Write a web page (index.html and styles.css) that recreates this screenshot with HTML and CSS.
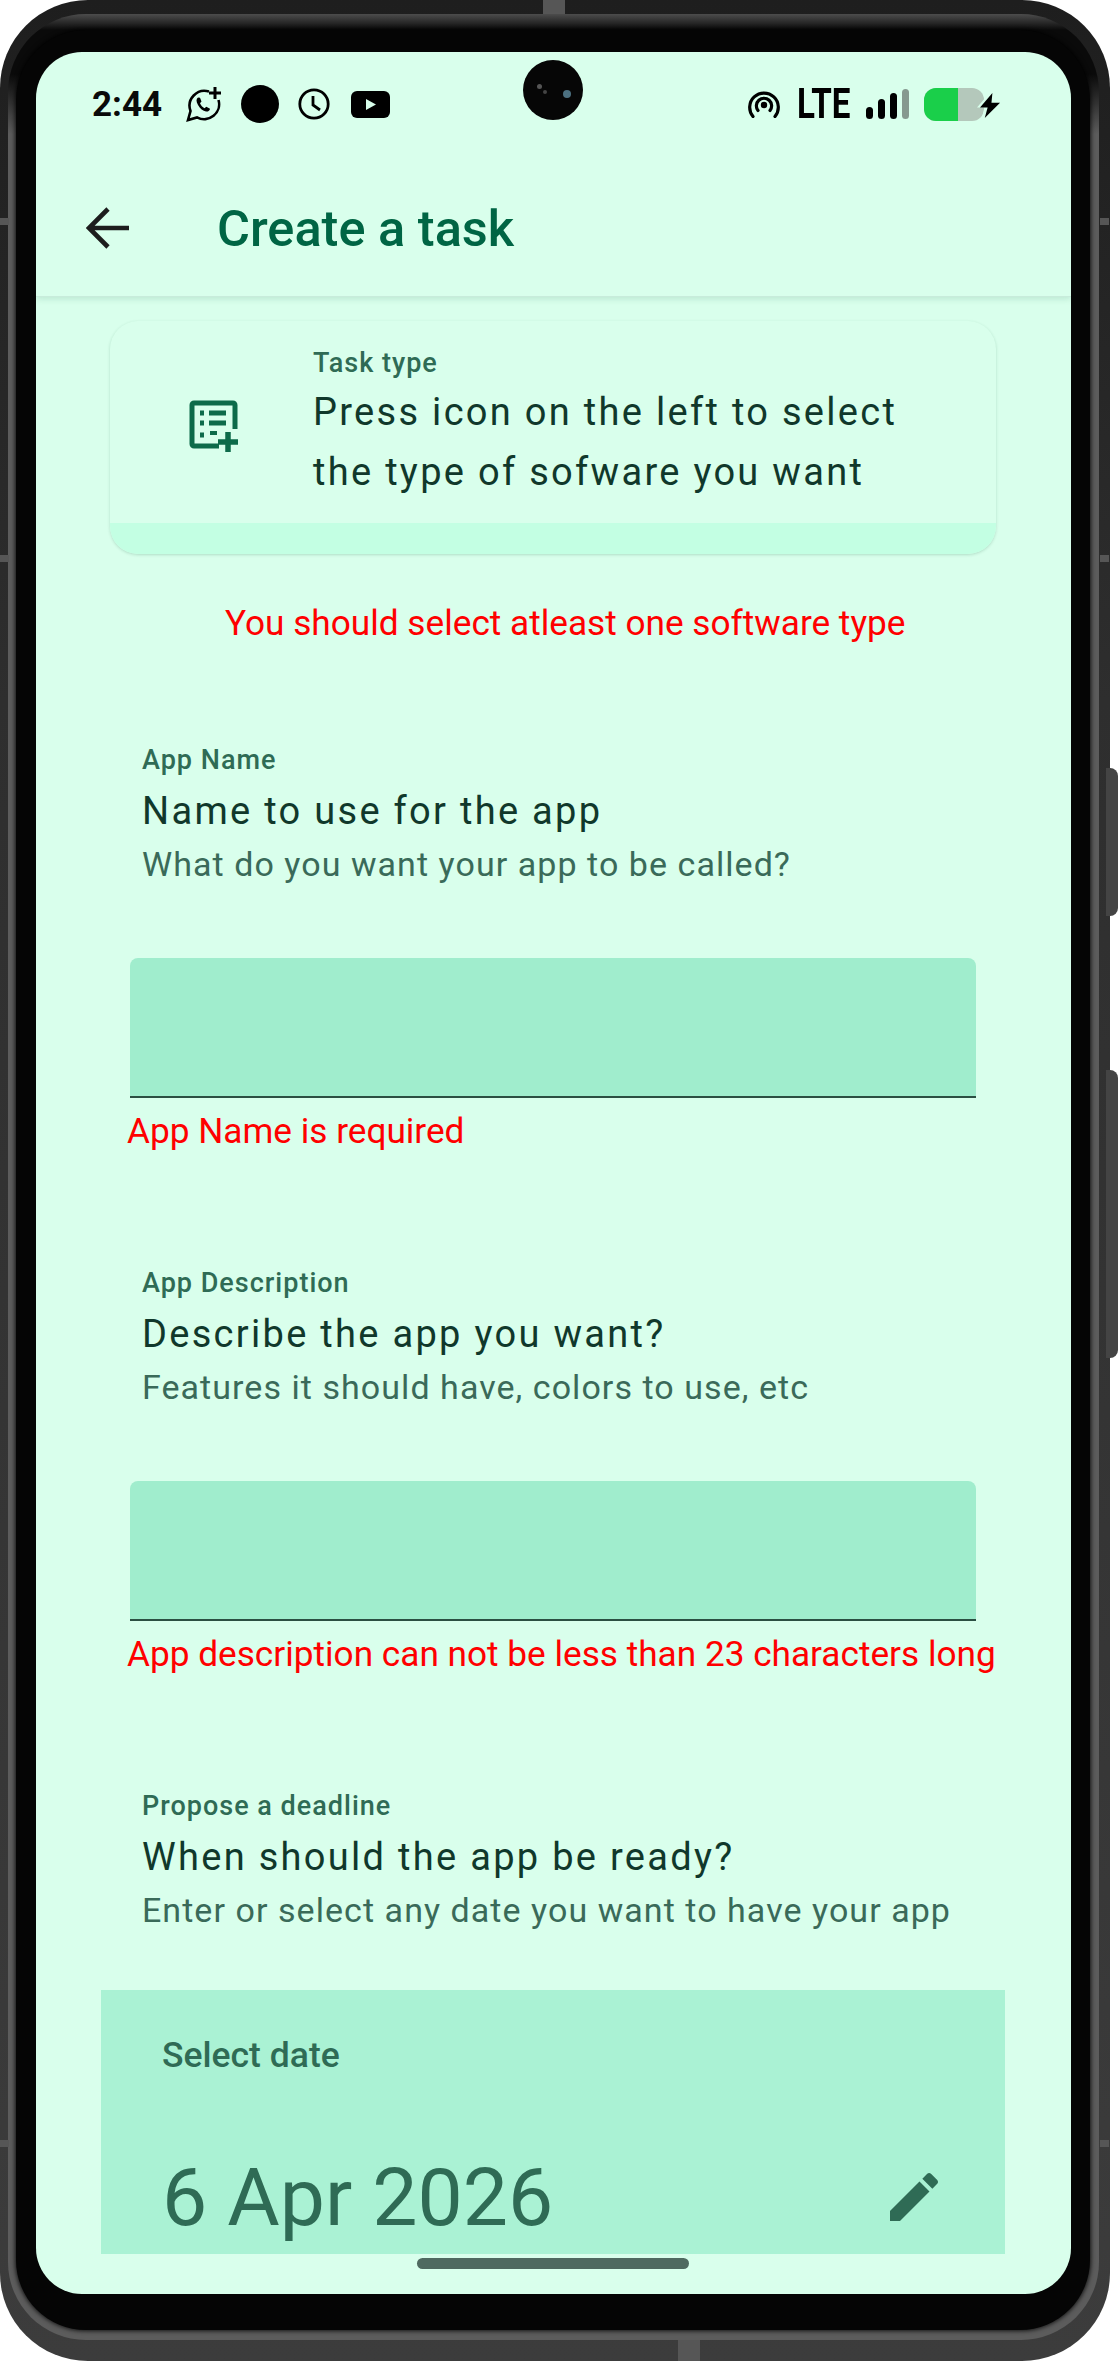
FILE: index.html
```html
<!DOCTYPE html>
<html lang="en">
<head>
    <meta charset="UTF-8">
    <meta name="viewport" content="width=device-width, initial-scale=1.0">
    <title>Create a task</title>
    <link rel="stylesheet" href="styles.css">
</head>
<body>
  <div class="device">
    <div class="side-button volume"></div>
    <div class="side-button power"></div>
    <div class="band band-top"></div>
    <div class="band band-bottom"></div>
    <div class="band band-left one"></div>
    <div class="band band-left two"></div>
    <div class="band band-left three"></div>
    <div class="band band-right one"></div>
    <div class="band band-right two"></div>
    <div class="band band-right three"></div>

    <div class="shell">
      <div class="rim">
        <div class="bezel">
          <div class="screen">
            <div class="camera">
              <span class="spec spec-a"></span>
              <span class="spec spec-b"></span>
              <span class="spec spec-c"></span>
            </div>

            <header class="top-bar">
              <div class="status-bar">
                <div class="status-left">
                  <span class="clock-time">2:44</span>
                  <svg class="ic-whatsapp" viewBox="0 0 36 36" fill="none" stroke="#000">
                    <path d="M23 5.500A15 15 0 0 0 4.500 25L2 34l9-2.600A15 15 0 0 0 32.500 14" stroke-width="2.600"/>
                    <path d="M12 11.500c-2 1.500-2 4 0 7.500 2 3.500 5 6 8 6.500 2 .3 3.800-.8 4-2.800l-3.700-2-1.800 1.500c-2-1-3.600-2.700-4.500-5l1.500-1.700-1.500-3.800z" fill="#000" stroke="none"/>
                    <path d="M29 1v12M23 7h12" stroke-width="3"/>
                  </svg>
                  <span class="dot"></span>
                  <svg class="ic-clock" viewBox="0 0 32 32" fill="none" stroke="#000" stroke-width="2.800">
                    <circle cx="16" cy="16" r="14.200"/>
                    <path d="M15 8v9l7 5"/>
                  </svg>
                  <svg class="ic-youtube" viewBox="0 0 39 27">
                    <rect width="39" height="27" rx="6" fill="#000"/>
                    <path d="M15 8v11l10-5.500z" fill="#d9ffec"/>
                  </svg>
                </div>
                <div class="status-right">
                  <svg class="ic-hotspot" viewBox="0 0 32 28" fill="none" stroke="#000" stroke-width="3.200" stroke-linecap="round">
                    <path d="M5 26.500A14.300 14.300 0 1 1 27 26.500"/>
                    <path d="M10 20.500A7.600 7.600 0 1 1 22 20.500"/>
                    <circle cx="16" cy="15" r="3.200" fill="#000" stroke="none"/>
                  </svg>
                  <span class="net-label">LTE</span>
                  <div class="signal">
                    <span class="bar b1"></span>
                    <span class="bar b2"></span>
                    <span class="bar b3"></span>
                    <span class="bar b4"></span>
                  </div>
                  <div class="battery">
                    <div class="battery-fill"></div>
                    <svg class="ic-bolt" viewBox="0 0 22 26">
                      <path d="M13 0L0 15h8l-3 11L21 10h-9z" fill="#000"/>
                    </svg>
                  </div>
                </div>
              </div>
              <div class="app-bar">
                <svg class="ic-back" viewBox="0 0 44 42" fill="none" stroke="#1d1d1d" stroke-width="4.600">
                  <path d="M43 21H4M22 2L3 21l19 19"/>
                </svg>
                <h1 class="page-title">Create a task</h1>
              </div>
            </header>

            <main class="content">
              <section class="type-card">
                <div class="type-card-body">
                  <svg class="ic-task" viewBox="0 0 50 52" fill="none" stroke="#0d6b4a">
                    <path d="M30 46H5a2 2 0 0 1-2-2V5a2 2 0 0 1 2-2h39a2 2 0 0 1 2 2v24" stroke-width="5"/>
                    <path d="M11 13h4M11 23h4M11 35h4" stroke-width="5"/>
                    <path d="M20 13h17M20 23h17" stroke-width="5"/>
                    <path d="M21 33h7" stroke-width="4"/>
                    <path d="M39 32v20M29 42h20" stroke-width="5.500"/>
                  </svg>
                  <div class="type-card-text">
                    <div class="field-label">Task type</div>
                    <div class="field-title two-line">Press icon on the left to select the type of sofware you want</div>
                  </div>
                </div>
                <div class="type-card-strip"></div>
              </section>

              <p class="error error-type">You should select atleast one software type</p>

              <section class="field">
                <div class="field-head">
                  <div class="field-label">App Name</div>
                  <div class="field-title">Name to use for the app</div>
                  <div class="field-desc">What do you want your app to be called?</div>
                </div>
                <div class="text-input"></div>
                <p class="error">App Name is required</p>
              </section>

              <section class="field">
                <div class="field-head">
                  <div class="field-label">App Description</div>
                  <div class="field-title">Describe the app you want?</div>
                  <div class="field-desc">Features it should have, colors to use, etc</div>
                </div>
                <div class="text-input"></div>
                <p class="error">App description can not be less than 23 characters long</p>
              </section>

              <section class="field">
                <div class="field-head">
                  <div class="field-label">Propose a deadline</div>
                  <div class="field-title">When should the app be ready?</div>
                  <div class="field-desc">Enter or select any date you want to have your app</div>
                </div>
              </section>

              <section class="date-box">
                <div class="date-label">Select date</div>
                <div class="date-row">
                  <span class="date-value">6 Apr 2026</span>
                  <svg class="ic-edit" viewBox="0 0 24 24">
                    <path d="M3 17.250V21h3.750L17.810 9.940l-3.750-3.750L3 17.250zM20.710 7.040c.39-.39.39-1.020 0-1.410l-2.340-2.340c-.39-.39-1.020-.39-1.410 0l-1.830 1.830 3.750 3.750 1.830-1.830z" fill="#2f6b55"/>
                  </svg>
                </div>
              </section>
            </main>

            <div class="gesture-pill"></div>
          </div>
        </div>
      </div>
    </div>
  </div>
</body>
</html>
```

FILE: styles.css
```css
* {
  box-sizing: border-box;
}
body {
  margin: 0;
  background: #fff;
  font-family: "Roboto", "Liberation Sans", sans-serif;
}
p, h1 {
  margin: 0;
}
svg {
  display: block;
  flex: none;
}

/* phone frame */
.device {
  position: relative;
  width: 1118px;
  height: 2361px;
  overflow: hidden;
}
.shell {
  width: 1110px;
  height: 2361px;
  padding: 14px 11px 21px 8px;
  border-radius: 88px;
  background: linear-gradient(#1e1e1e, #2e2e2e 700px, #3c3c3c);
}
.rim {
  height: 100%;
  padding: 16px 9px 10px 8px;
  border-radius: 78px;
  background: linear-gradient(#4c4c4c, #0a0a0a 16px, #0a0a0a 60px, #5c5c5c 120px, #5c5c5c);
}
.bezel {
  height: 100%;
  padding: 22px 19px 36px 20px;
  border-radius: 70px;
  background: #050505;
  box-shadow: 0 0 4px 1px rgba(0, 0, 0, 0.8);
}
.side-button {
  position: absolute;
  right: 0;
  width: 12px;
  border-radius: 0 8px 8px 0;
  background: #444;
}
.side-button.volume {
  top: 768px;
  height: 148px;
}
.side-button.power {
  top: 1070px;
  height: 288px;
}
.band {
  position: absolute;
  background: #565656;
}
.band-top {
  top: 0;
  left: 543px;
  width: 22px;
  height: 14px;
}
.band-bottom {
  bottom: 0;
  left: 678px;
  width: 22px;
  height: 21px;
}
.band-left, .band-right {
  width: 9px;
  height: 7px;
}
.band-left {
  left: 0;
}
.band-right {
  left: 1100px;
}
.one {
  top: 218px;
}
.two {
  top: 555px;
}
.three {
  top: 2140px;
}

/* screen */
.screen {
  position: relative;
  height: 100%;
  overflow: hidden;
  border-radius: 46px;
  background: #d9ffec;
}
.camera {
  position: absolute;
  top: 8px;
  left: 487px;
  width: 60px;
  height: 60px;
  border-radius: 50%;
  background: #060606;
}
.spec {
  position: absolute;
  border-radius: 50%;
}
.spec-a {
  top: 24px;
  left: 14px;
  width: 5px;
  height: 5px;
  background: #555;
}
.spec-b {
  top: 30px;
  left: 20px;
  width: 4px;
  height: 4px;
  background: #444;
}
.spec-c {
  top: 30px;
  left: 40px;
  width: 8px;
  height: 8px;
  background: #4c7080;
}
.top-bar {
  height: 245px;
  border-bottom: 1px solid #c8ecdb;
  box-shadow: 0 2px 6px rgba(40, 110, 80, 0.16);
}
.status-bar {
  display: flex;
  align-items: center;
  justify-content: space-between;
  height: 104px;
  padding: 0 87px 0 56px;
}
.status-left, .status-right {
  display: flex;
  align-items: center;
}
.clock-time {
  width: 94px;
  font-size: 35px;
  font-weight: 700;
  color: #0a0a0a;
}
.ic-whatsapp {
  width: 36px;
  height: 36px;
}
.dot {
  width: 38px;
  height: 38px;
  margin-left: 19px;
  border-radius: 50%;
  background: #000;
}
.ic-clock {
  width: 32px;
  height: 32px;
  margin-left: 19px;
}
.ic-youtube {
  width: 39px;
  height: 27px;
  margin-left: 21px;
}
.ic-hotspot {
  width: 32px;
  height: 28px;
}
.net-label {
  width: 54px;
  margin-left: 17px;
  font-size: 42px;
  line-height: 32px;
  font-weight: 700;
  color: #000;
  transform: scaleX(0.79);
  transform-origin: left center;
}
.signal {
  display: flex;
  align-items: flex-end;
  gap: 5px;
  height: 30px;
  margin-left: 15px;
}
.bar {
  width: 7px;
  border-radius: 4px;
  background: #000;
}
.b1 {
  height: 12px;
}
.b2 {
  height: 20px;
}
.b3 {
  height: 26px;
}
.b4 {
  height: 30px;
  background: #86998f;
}
.battery {
  position: relative;
  width: 60px;
  height: 33px;
  margin-left: 15px;
  border-radius: 12px;
  background: #b4c8bb;
}
.battery-fill {
  width: 34px;
  height: 100%;
  border-radius: 12px 0 0 12px;
  background: #1acf4a;
}
.ic-bolt {
  position: absolute;
  top: 5px;
  left: 56px;
  width: 21px;
  height: 25px;
  filter: drop-shadow(-3px 0 0 #d9ffec);
}
.app-bar {
  display: flex;
  align-items: center;
  height: 140px;
  padding: 4px 0 0 50px;
}
.ic-back {
  width: 44px;
  height: 42px;
}
.page-title {
  margin-left: 87px;
  font-size: 50.500px;
  font-weight: 500;
  color: #006544;
}

/* form */
.content {
  display: flow-root;
}
.type-card {
  margin: 24px 75px 0 74px;
  height: 233px;
  border-radius: 28px;
  overflow: hidden;
  box-shadow: 0 1px 3px rgba(30, 100, 70, 0.22);
}
.type-card-body {
  display: flex;
  height: 202px;
  padding: 24px 0 0 79px;
}
.ic-task {
  width: 50px;
  height: 52px;
  margin-top: 55px;
}
.type-card-text {
  margin-left: 74px;
  width: 640px;
}
.type-card-strip {
  height: 31px;
  background: #c3ffe3;
}
.field-label {
  font-size: 27px;
  line-height: 36px;
  font-weight: 500;
  letter-spacing: 1px;
  color: #2f6b55;
}
.field-title {
  margin-top: 7px;
  font-size: 38px;
  line-height: 52px;
  letter-spacing: 2.300px;
  color: #10382b;
}
.field-title.two-line {
  margin-top: 1px;
  line-height: 60px;
}
.field-desc {
  margin-top: 5px;
  font-size: 34px;
  line-height: 44px;
  letter-spacing: 1.050px;
  color: #3a6a59;
}
.error {
  margin: 11px 0 0 91px;
  font-size: 35.200px;
  line-height: 44px;
  color: #ff0000;
  white-space: nowrap;
}
.error-type {
  margin: 47px 0 0 189px;
}
.field {
  margin-top: 112px;
}
.error-type + .field {
  margin-top: 97px;
}
.field-head {
  margin-left: 106px;
}
.text-input {
  width: 846px;
  height: 140px;
  margin: 72px 0 0 94px;
  border-radius: 8px 8px 0 0;
  border-bottom: 2px solid #2b4f42;
  background: #a0edcd;
}
.date-box {
  width: 904px;
  height: 264px;
  margin: 58px 0 0 65px;
  padding: 45px 59px 0 61px;
  background: #aaf2d4;
}
.date-label {
  font-size: 35.500px;
  line-height: 40px;
  font-weight: 500;
  color: #2f6b55;
}
.date-row {
  display: flex;
  align-items: center;
  justify-content: space-between;
  height: 90px;
  margin-top: 78px;
}
.date-value {
  font-size: 80.500px;
  line-height: 90px;
  color: #2f6b55;
}
.ic-edit {
  width: 64px;
  height: 64px;
  margin-top: -2px;
}
.gesture-pill {
  position: absolute;
  top: 2206px;
  left: 381px;
  width: 272px;
  height: 11px;
  border-radius: 6px;
  background: #4f6a60;
}
```
